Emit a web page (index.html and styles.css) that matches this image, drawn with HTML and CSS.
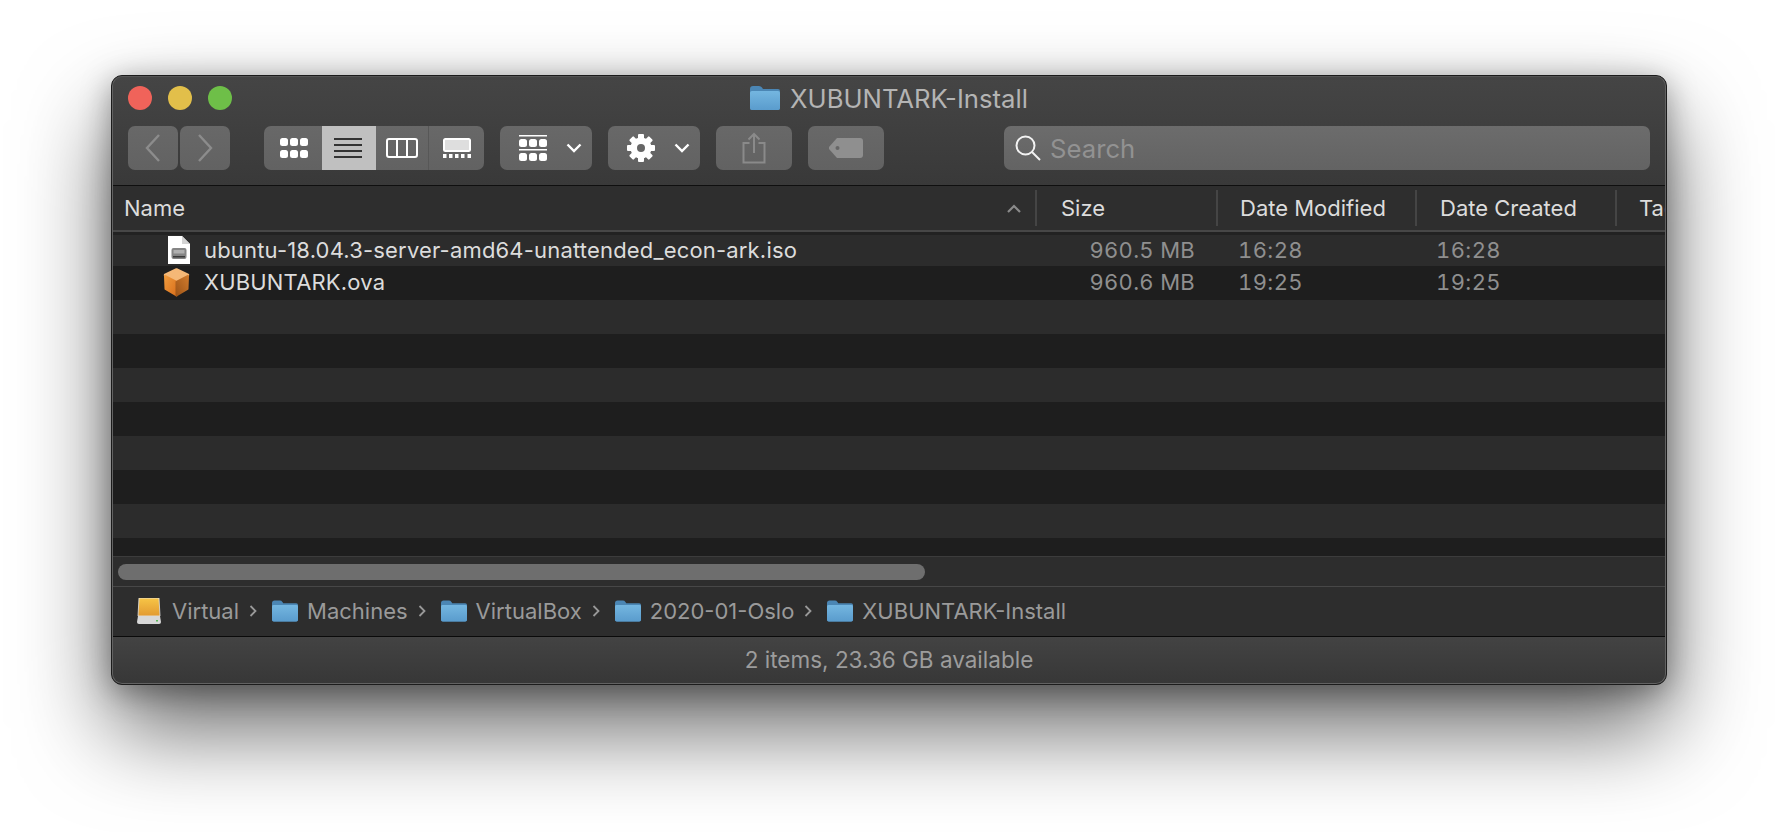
FILE: index.html
```html
<!DOCTYPE html>
<html lang="en">
<head>
    <meta charset="UTF-8">
    <title>XUBUNTARK-Install</title>
    <link rel="stylesheet" href="styles.css">
</head>
<body>

    <svg class="defs" width="0" height="0">
        <defs>
            <linearGradient id="folder-fill" x1="0" y1="0" x2="0" y2="1">
                <stop offset="0" stop-color="#74b6e0"/>
                <stop offset="1" stop-color="#5a9ccd"/>
            </linearGradient>
            <linearGradient id="cube-left" x1="0" y1="0" x2="1" y2="1">
                <stop offset="0" stop-color="#f09a3c"/>
                <stop offset="1" stop-color="#d9701c"/>
            </linearGradient>
            <linearGradient id="cube-right" x1="1" y1="0" x2="0" y2="1">
                <stop offset="0" stop-color="#cf7a2c"/>
                <stop offset="1" stop-color="#9e5518"/>
            </linearGradient>
            <symbol id="folder" viewBox="0 0 30 24">
                <path d="M0 3 Q0 0 3 0 H9 Q11 0 12 1.500 L13 3 H28 Q30 3 30 5 V22 Q30 24 28 24 H2 Q0 24 0 22 Z" fill="#4b86b4"/>
                <path d="M0 6.500 Q0 5 2 5 H28 Q30 5 30 6.500 V22 Q30 24 28 24 H2 Q0 24 0 22 Z" fill="url(#folder-fill)"/>
            </symbol>
        </defs>
    </svg>

    <div class="window">
        <div class="toolbar">
            <div class="titlebar">
                <div class="lights">
                    <span class="light red"></span>
                    <span class="light yellow"></span>
                    <span class="light green"></span>
                </div>
                <div class="title">
                    <svg class="title-folder"><use href="#folder"/></svg>
                    <span>XUBUNTARK-Install</span>
                </div>
            </div>
            <div class="tools">
                <div class="nav">
                    <button class="btn nav-btn">
                        <svg width="16" height="28" viewBox="0 0 16 28"><path d="M14 1 L2 14 L14 27" fill="none" stroke="#8c8c8c" stroke-width="2.400"/></svg>
                    </button>
                    <button class="btn nav-btn">
                        <svg width="16" height="28" viewBox="0 0 16 28"><path d="M2 1 L14 14 L2 27" fill="none" stroke="#8c8c8c" stroke-width="2.400"/></svg>
                    </button>
                </div>

                <div class="btn views">
                    <div class="view view-icons">
                        <svg width="28" height="20" viewBox="0 0 28 20" fill="#fff">
                            <rect x="0" y="0" width="8" height="8" rx="2.500"/><rect x="10" y="0" width="8" height="8" rx="2.500"/><rect x="20" y="0" width="8" height="8" rx="2.500"/>
                            <rect x="0" y="12" width="8" height="8" rx="2.500"/><rect x="10" y="12" width="8" height="8" rx="2.500"/><rect x="20" y="12" width="8" height="8" rx="2.500"/>
                        </svg>
                    </div>
                    <div class="view view-list active">
                        <svg width="28" height="20" viewBox="0 0 28 20" fill="#333">
                            <rect y="0" width="28" height="2"/><rect y="6" width="28" height="2"/><rect y="12" width="28" height="2"/><rect y="18" width="28" height="2"/>
                        </svg>
                    </div>
                    <div class="view view-columns">
                        <svg width="32" height="20" viewBox="0 0 32 20" fill="none" stroke="#fff" stroke-width="2">
                            <rect x="1" y="1" width="30" height="18" rx="2"/><path d="M11 1 V19 M21 1 V19"/>
                        </svg>
                    </div>
                    <div class="view view-gallery">
                        <svg width="28" height="20" viewBox="0 0 28 20">
                            <rect x="1" y="1" width="26" height="12" rx="1.500" fill="#dedede" stroke="#fff" stroke-width="2"/>
                            <g fill="#fff"><rect x="0" y="16" width="3.500" height="4"/><rect x="6" y="16" width="3.500" height="4"/><rect x="12" y="16" width="3.500" height="4"/><rect x="18" y="16" width="3.500" height="4"/><rect x="24.500" y="16" width="3.500" height="4"/></g>
                        </svg>
                    </div>
                </div>

                <button class="btn menu-btn">
                    <svg width="28" height="26" viewBox="0 0 28 26" fill="#fff">
                        <rect y="0" width="28" height="1.500"/>
                        <rect x="0" y="4" width="8" height="8" rx="2.500"/><rect x="10" y="4" width="8" height="8" rx="2.500"/><rect x="20" y="4" width="8" height="8" rx="2.500"/>
                        <rect y="14" width="28" height="1.500"/>
                        <rect x="0" y="18" width="8" height="8" rx="2.500"/><rect x="10" y="18" width="8" height="8" rx="2.500"/><rect x="20" y="18" width="8" height="8" rx="2.500"/>
                    </svg>
                    <svg class="chev" width="16" height="10" viewBox="0 0 16 10"><path d="M1.500 1.500 L8 8 L14.500 1.500" fill="none" stroke="#fff" stroke-width="2.400"/></svg>
                </button>

                <button class="btn menu-btn">
                    <svg width="28" height="28" viewBox="0 0 28 28">
                        <g fill="#fff">
                            <circle cx="14" cy="14" r="10.500"/>
                            <rect x="11" y="0" width="6" height="28" rx="1"/>
                            <rect x="11" y="0" width="6" height="28" rx="1" transform="rotate(45 14 14)"/>
                            <rect x="11" y="0" width="6" height="28" rx="1" transform="rotate(90 14 14)"/>
                            <rect x="11" y="0" width="6" height="28" rx="1" transform="rotate(135 14 14)"/>
                        </g>
                        <circle cx="14" cy="14" r="4" fill="#666"/>
                    </svg>
                    <svg class="chev" width="16" height="10" viewBox="0 0 16 10"><path d="M1.500 1.500 L8 8 L14.500 1.500" fill="none" stroke="#fff" stroke-width="2.400"/></svg>
                </button>

                <button class="btn share-btn">
                    <svg width="24" height="32" viewBox="0 0 24 32" fill="none" stroke="#8a8a8a" stroke-width="2">
                        <path d="M7.500 11 H1.500 V30.500 H22.500 V11 H16.500"/>
                        <path d="M12 21 V2 M6.500 7.500 L12 2 L17.500 7.500"/>
                    </svg>
                </button>

                <button class="btn share-btn">
                    <svg width="34" height="20" viewBox="0 0 34 20">
                        <path d="M8 0 H31 Q34 0 34 3 V17 Q34 20 31 20 H8 L0 11 V9 Z" fill="#8f8f8f"/>
                        <circle cx="8.500" cy="10" r="2" fill="#666"/>
                    </svg>
                </button>

                <div class="search">
                    <svg width="26" height="26" viewBox="0 0 26 26" fill="none" stroke="#f2f2f2" stroke-width="2">
                        <circle cx="10.500" cy="10.500" r="9"/><path d="M17 17 L25 25"/>
                    </svg>
                    <span>Search</span>
                </div>
            </div>
        </div>

        <div class="header">
            <div class="col col-name">Name
                <svg class="sort" width="14" height="9" viewBox="0 0 14 9"><path d="M1 8 L7 2 L13 8" fill="none" stroke="#8a8a8a" stroke-width="2.200"/></svg>
            </div>
            <div class="col col-sep col-size">Size</div>
            <div class="col col-sep">Date Modified</div>
            <div class="col col-sep col-created">Date Created</div>
            <div class="col col-sep">Tags</div>
        </div>

        <div class="list">
            <div class="row">
                <div class="file">
                    <svg class="file-icon" width="22" height="28" viewBox="0 0 22 28">
                        <path d="M0 0 H14 L22 8 V28 H0 Z" fill="#fff"/>
                        <path d="M14 0 L22 8 H14 Z" fill="#d4d4d4"/>
                        <rect x="3.500" y="12" width="15" height="11" rx="2" fill="#858585"/>
                        <rect x="5.500" y="14" width="11" height="3.500" fill="#b0b0b0"/>
                        <rect x="5" y="20" width="12" height="1.500" fill="#3a3a3a"/>
                    </svg>
                    <span>ubuntu-18.04.3-server-amd64-unattended_econ-ark.iso</span>
                </div>
                <div class="size">960.5 MB</div>
                <div class="date">16:28</div>
                <div class="date">16:28</div>
            </div>
            <div class="row">
                <div class="file">
                    <svg class="file-icon" width="27" height="29" viewBox="0 0 27 29">
                        <path d="M13.500 1.500 L25 7 L13.500 13 L2 7 Z" fill="#f5b877" stroke="#f5b877" stroke-width="2.500" stroke-linejoin="round"/>
                        <path d="M2 8 L13.500 14 V27.500 L2.500 21 Z" fill="url(#cube-left)" stroke="url(#cube-left)" stroke-width="2" stroke-linejoin="round"/>
                        <path d="M25 8 L13.500 14 V27.500 L24.500 21 Z" fill="url(#cube-right)" stroke="url(#cube-right)" stroke-width="2" stroke-linejoin="round"/>
                    </svg>
                    <span>XUBUNTARK.ova</span>
                </div>
                <div class="size">960.6 MB</div>
                <div class="date">19:25</div>
                <div class="date">19:25</div>
            </div>
        </div>

        <div class="scroll">
            <div class="thumb"></div>
        </div>

        <div class="path">
            <svg class="drive" width="24" height="26" viewBox="0 0 24 26">
                <defs>
                    <linearGradient id="drive-fill" x1="0" y1="0" x2="0" y2="1">
                        <stop offset="0" stop-color="#f7c546"/>
                        <stop offset="1" stop-color="#e29a32"/>
                    </linearGradient>
                </defs>
                <path d="M2 0 H22 L23 18 H1 Z" fill="url(#drive-fill)" stroke="#e8e8e8" stroke-width="0.800"/>
                <path d="M1 18 H23 L24 24 Q24 26 22 26 H2 Q0 26 0 24 Z" fill="#d8d8d8"/>
                <rect x="19" y="22" width="2" height="1.500" fill="#5cb85c"/>
            </svg>
            <span class="crumb crumb-first">Virtual</span>
            <svg class="sep" width="8" height="12" viewBox="0 0 8 12"><path d="M1.500 1 L6.500 6 L1.500 11" fill="none" stroke="#999" stroke-width="1.800"/></svg>
            <svg class="path-folder"><use href="#folder"/></svg>
            <span class="crumb">Machines</span>
            <svg class="sep" width="8" height="12" viewBox="0 0 8 12"><path d="M1.500 1 L6.500 6 L1.500 11" fill="none" stroke="#999" stroke-width="1.800"/></svg>
            <svg class="path-folder"><use href="#folder"/></svg>
            <span class="crumb">VirtualBox</span>
            <svg class="sep" width="8" height="12" viewBox="0 0 8 12"><path d="M1.500 1 L6.500 6 L1.500 11" fill="none" stroke="#999" stroke-width="1.800"/></svg>
            <svg class="path-folder"><use href="#folder"/></svg>
            <span class="crumb">2020-01-Oslo</span>
            <svg class="sep" width="8" height="12" viewBox="0 0 8 12"><path d="M1.500 1 L6.500 6 L1.500 11" fill="none" stroke="#999" stroke-width="1.800"/></svg>
            <svg class="path-folder"><use href="#folder"/></svg>
            <span class="crumb">XUBUNTARK-Install</span>
        </div>

        <div class="status">2 items, 23.36 GB available</div>
    </div>

</body>
</html>
```

FILE: styles.css
```css
* {
    margin: 0;
    padding: 0;
    box-sizing: border-box;
}
html, body {
    height: 100%;
    overflow: hidden;
}
body {
    background-color: #fff;
    font-family: Inter, "Liberation Sans", sans-serif;
    padding: 75px 0 0 111px;
}
.defs {
    display: block;
    height: 0;
}
.window {
    width: 1556px;
    height: 610px;
    display: flex;
    flex-direction: column;
    border: 1px solid #1c1c1c;
    border-radius: 11px;
    overflow: hidden;
    background-color: #2d2d2d;
    box-shadow: 0 44px 90px rgba(0, 0, 0, 0.6), 0 6px 30px rgba(0, 0, 0, 0.35);
    position: relative;
}
.window::after {
    content: "";
    position: absolute;
    inset: 0;
    border: 1px solid #626262;
    border-top-color: #555;
    border-radius: 10px;
    pointer-events: none;
}
.toolbar {
    height: 110px;
    flex: none;
    background: linear-gradient(#454545, #393939);
    border-bottom: 1px solid #0f0f0f;
    padding: 0 16px;
}
.titlebar {
    height: 50px;
    padding-bottom: 6px;
    display: flex;
    align-items: center;
}
.lights {
    display: flex;
    gap: 16px;
    width: 0;
}
.light {
    flex: none;
    width: 24px;
    height: 24px;
    border-radius: 50%;
}
.red { background-color: #f0635a; }
.yellow { background-color: #e2bf4a; }
.green { background-color: #6ebf48; }
.title {
    flex: 1;
    display: flex;
    justify-content: center;
    align-items: center;
    gap: 10px;
    color: #b4b4b4;
    font-size: 25.700px;
}
.title-folder {
    width: 30px;
    height: 24px;
}
.tools {
    display: flex;
    height: 44px;
}
.btn {
    background: linear-gradient(#686868, #626262);
    border: none;
    border-radius: 7px;
    display: flex;
    align-items: center;
    justify-content: center;
    flex: none;
}
.nav {
    display: flex;
    gap: 2px;
    margin-right: 34px;
}
.nav-btn {
    width: 50px;
}
.views {
    width: 220px;
    overflow: hidden;
    align-items: stretch;
    margin-right: 16px;
}
.view {
    display: flex;
    align-items: center;
    justify-content: center;
}
.view-icons { width: 58px; padding-left: 2px; }
.view-list { width: 54px; padding-right: 2px; }
.view-columns { width: 53px; border-right: 1px solid #575757; }
.view-gallery { width: 55px; }
.active {
    background-color: #c0c0c0;
}
.menu-btn {
    width: 92px;
    margin-right: 16px;
    gap: 19px;
    padding-left: 9px;
}
.share-btn {
    width: 76px;
    margin-right: 16px;
}
.search {
    margin-left: auto;
    width: 646px;
    background: linear-gradient(#6c6c6c, #636363);
    border-radius: 7px;
    display: flex;
    align-items: center;
    gap: 9px;
    padding-left: 11px;
    color: #929292;
    font-size: 25.700px;
}
.header {
    height: 46px;
    flex: none;
    display: grid;
    grid-template-columns: 923px 181px 199px 200px 1fr;
    align-items: center;
    background-color: #2e2e2e;
    border-bottom: 2px solid #474747;
    color: #dcdcdc;
    font-size: 22px;
    overflow: hidden;
}
.col {
    height: 36px;
    display: flex;
    align-items: center;
    white-space: nowrap;
    overflow: hidden;
}
.col-name {
    padding-left: 12px;
    justify-content: space-between;
    padding-right: 14px;
}
.col-sep {
    border-left: 2px solid #454545;
    padding-left: 22px;
}
.col-size {
    padding-left: 24px;
}
.col-created {
    padding-left: 23px;
}
.list {
    height: 324px;
    flex: none;
    overflow: hidden;
    background:
        linear-gradient(#222, #222) top / 100% 3px no-repeat,
        repeating-linear-gradient(#2c2c2c 0, #2c2c2c 34px, #1e1e1e 34px, #1e1e1e 68px);
    font-size: 22px;
}
.row {
    height: 34px;
    display: grid;
    grid-template-columns: 923px 160px 198px 1fr;
    align-items: center;
    padding-top: 2px;
}
.row + .row {
    padding-top: 0;
    padding-bottom: 2px;
}
.file {
    display: grid;
    grid-template-columns: 78px auto;
    column-gap: 14px;
    align-items: center;
    color: #dcdcdc;
    white-space: nowrap;
    letter-spacing: 0.18px;
}
.file-icon {
    justify-self: end;
}
.size {
    color: #8f8f8f;
    text-align: right;
    font-variant-numeric: tabular-nums;
    letter-spacing: 0.3px;
}
.date {
    color: #8f8f8f;
    padding-left: 43px;
    font-variant-numeric: tabular-nums;
    letter-spacing: 0.4px;
}
.scroll {
    height: 31px;
    flex: none;
    background-color: #2d2d2d;
    border-top: 1px solid #3c3c3c;
    border-bottom: 1px solid #474747;
    padding: 7px 0 0 6px;
}
.thumb {
    width: 807px;
    height: 16px;
    border-radius: 8px;
    background-color: #6e6e6e;
}
.path {
    height: 50px;
    flex: none;
    display: flex;
    align-items: center;
    background-color: #2d2d2d;
    border-bottom: 1px solid #0a0a0a;
    padding: 0 0 2px 25px;
    color: #9a9a9a;
    font-size: 22px;
}
.crumb-first {
    margin-left: 11px;
}
.path-folder {
    width: 26px;
    height: 22px;
    margin-right: 9px;
}
.sep {
    flex: none;
    margin: 0 15px 0 10px;
}
.status {
    flex: 1;
    display: flex;
    align-items: center;
    justify-content: center;
    background: linear-gradient(#434343, #373737);
    color: #9c9c9c;
    font-size: 22.500px;
    padding-bottom: 2px;
}
```
